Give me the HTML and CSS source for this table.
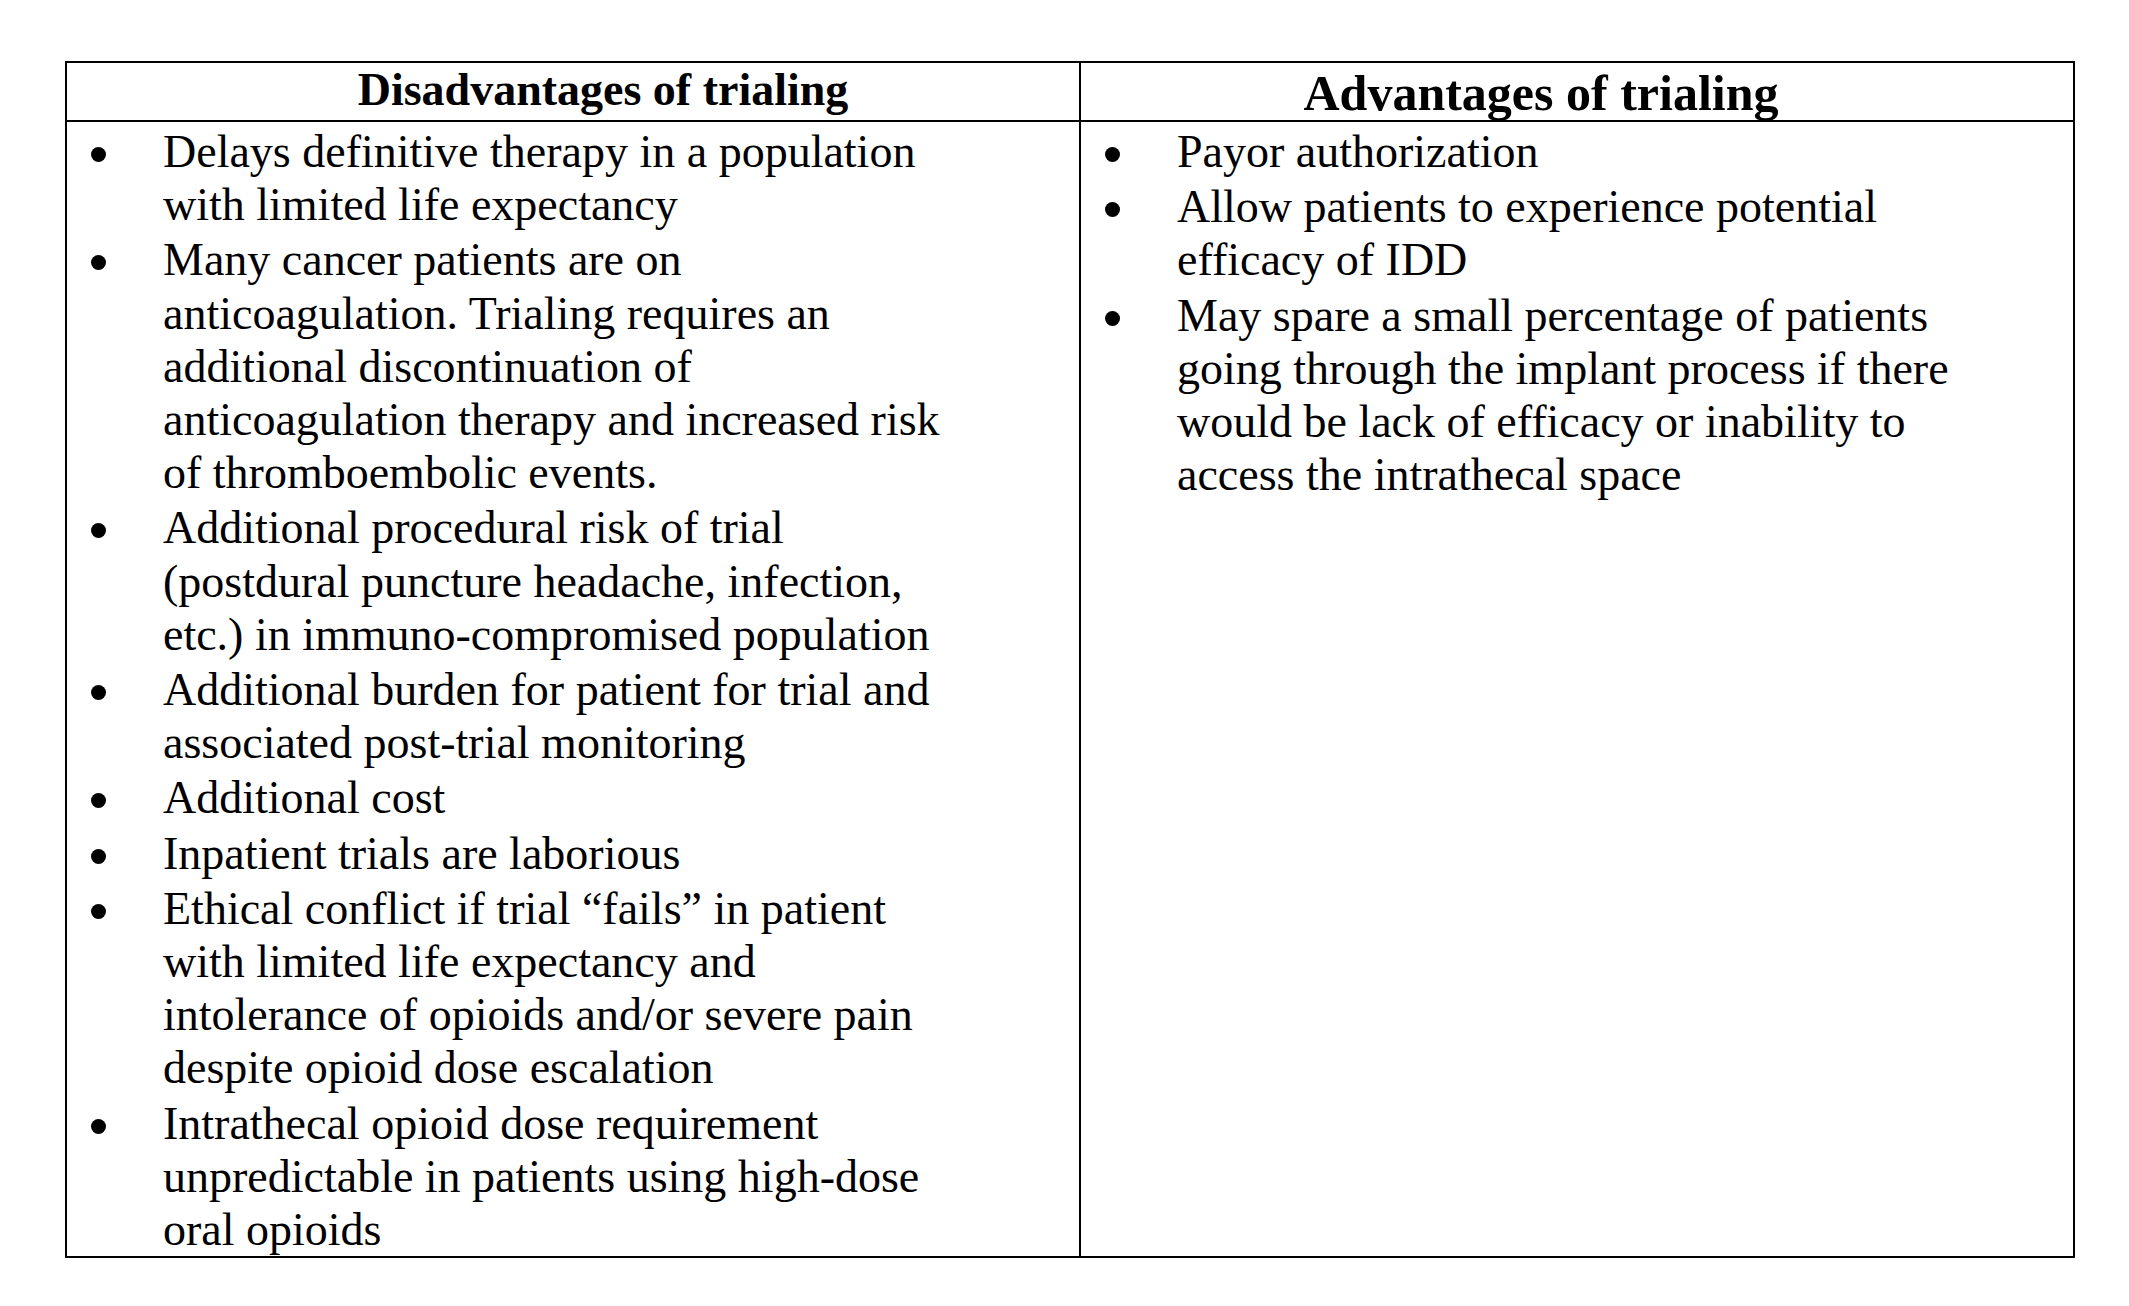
FILE: index.html
```html
<!DOCTYPE html>
<html lang="en">
<head>
<meta charset="utf-8">
<title>Trialing</title>
<link rel="stylesheet" href="styles.css">
</head>
<body>
<div class="table">
  <div class="cell head head-left">Disadvantages of trialing</div>
  <div class="cell head head-right">Advantages of trialing</div>
  <div class="cell body body-left">
    <ul class="list">
      <li><span>Delays definitive therapy in a population<br>with limited life expectancy</span></li>
      <li><span>Many cancer patients are on<br>anticoagulation. Trialing requires an<br>additional discontinuation of<br>anticoagulation therapy and increased risk<br>of thromboembolic events.</span></li>
      <li><span>Additional procedural risk of trial<br>(postdural puncture headache, infection,<br>etc.) in immuno-compromised population</span></li>
      <li><span>Additional burden for patient for trial and<br>associated post-trial monitoring</span></li>
      <li><span>Additional cost</span></li>
      <li><span>Inpatient trials are laborious</span></li>
      <li><span>Ethical conflict if trial “fails” in patient<br>with limited life expectancy and<br>intolerance of opioids and/or severe pain<br>despite opioid dose escalation</span></li>
      <li><span>Intrathecal opioid dose requirement<br>unpredictable in patients using high-dose<br>oral opioids</span></li>
    </ul>
  </div>
  <div class="cell body body-right">
    <ul class="list">
      <li><span>Payor authorization</span></li>
      <li><span>Allow patients to experience potential<br>efficacy of IDD</span></li>
      <li><span>May spare a small percentage of patients<br>going through the implant process if there<br>would be lack of efficacy or inability to<br>access the intrathecal space</span></li>
    </ul>
  </div>
</div>
</body>
</html>
```

FILE: styles.css
```css
html, body {
  margin: 0;
  padding: 0;
  background: #ffffff;
}

body {
  font-family: "Liberation Serif", "Times New Roman", serif;
  color: #000000;
  width: 2129px;
  height: 1306px;
  overflow: hidden;
}

.table {
  display: grid;
  grid-template-columns: 1014px 992px;
  grid-template-rows: 59px auto;
  width: max-content;
  margin: 61px 0 0 65px;
  border: 2px solid #000000;
}

.cell {
  box-sizing: border-box;
}

.head {
  border-bottom: 2px solid #000000;
  font-weight: bold;
  text-align: center;
  white-space: nowrap;
}

.head-left {
  border-right: 2px solid #000000;
  font-size: 46px;
  line-height: 46px;
  padding-top: 4px;
  padding-left: 60px;
}

.head-right {
  font-size: 50px;
  line-height: 50px;
  padding-top: 5px;
  padding-right: 72px;
}

.body-left {
  border-right: 2px solid #000000;
}

.body {
  padding-top: 3px;
}

.list {
  list-style: none;
  margin: 0;
  padding: 0;
  font-size: 46px;
  line-height: 53.2px;
  white-space: nowrap;
}

.list li {
  display: flex;
  align-items: flex-start;
  margin-bottom: 2px;
}

.list li:last-child {
  margin-bottom: 0;
}

.list li::before {
  content: "";
  flex: 0 0 15px;
  width: 15px;
  height: 15px;
  border-radius: 50%;
  background: #000000;
  margin-top: 22px;
  margin-left: 24px;
  margin-right: 57px;
}
```
